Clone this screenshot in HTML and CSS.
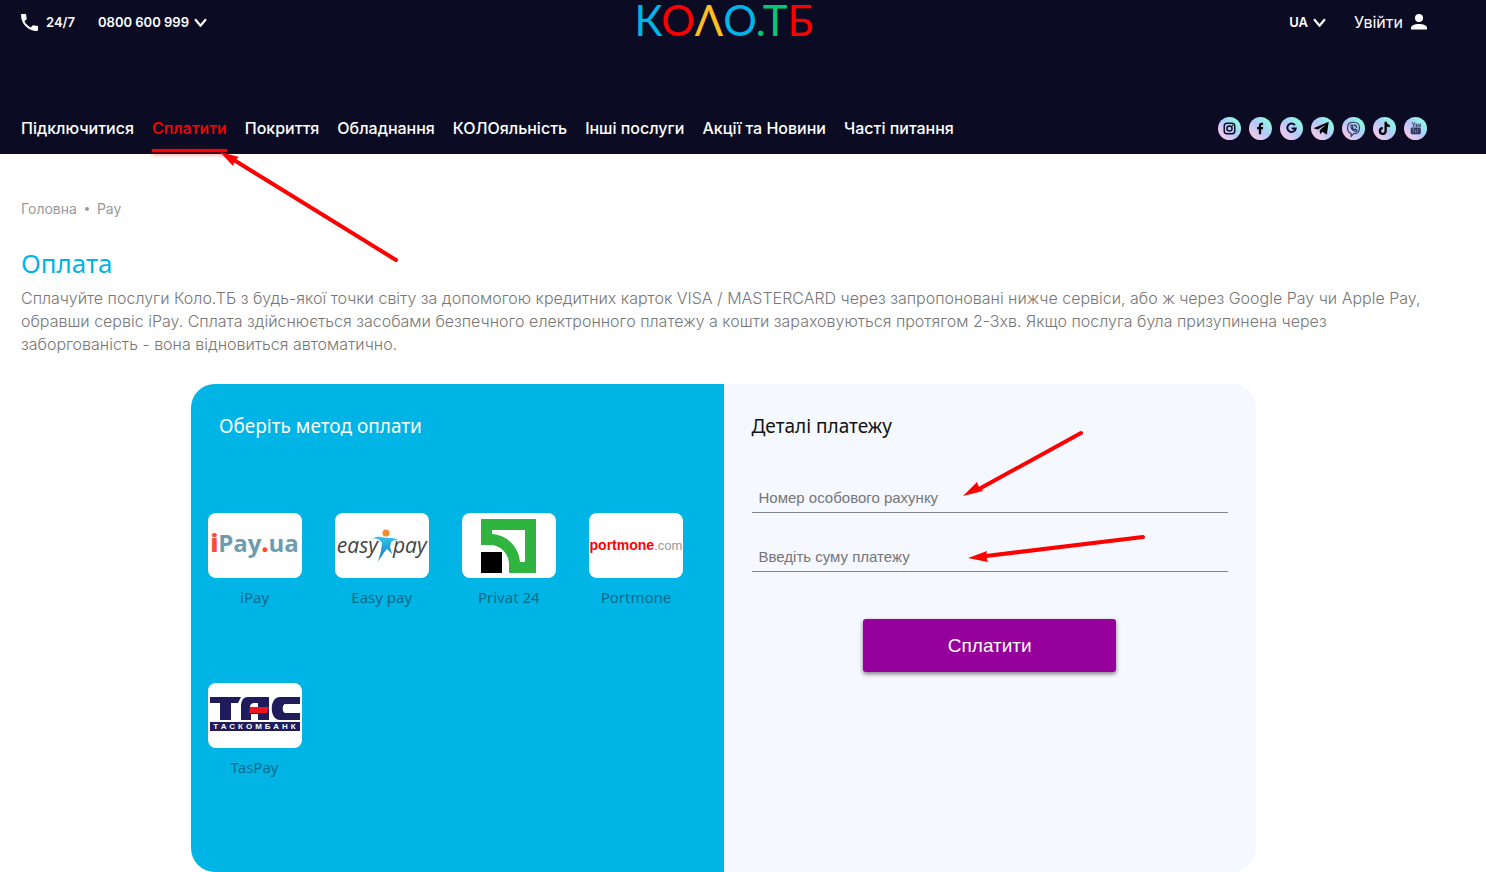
FILE: index.html
```html
<!DOCTYPE html>
<html lang="uk">
<head>
    <meta charset="UTF-8">
    <meta name="viewport" content="width=device-width, initial-scale=1.0">
    <title>Коло.ТБ - Оплата</title>
    <link rel="stylesheet" href="styles.css">
</head>
<body>
    <svg width="0" height="0" class="defs" aria-hidden="true">
        <defs>
            <linearGradient id="bubble" x1="0" y1="1" x2="1" y2="0">
                <stop offset="0.1" stop-color="#ffc8e6"/>
                <stop offset="0.5" stop-color="#b4c8fa"/>
                <stop offset="0.85" stop-color="#8cfae1"/>
            </linearGradient>
            <linearGradient id="man" x1="0" y1="0" x2="0" y2="1">
                <stop offset="0" stop-color="#35c4ec"/>
                <stop offset="1" stop-color="#0e78b4"/>
            </linearGradient>
        </defs>
    </svg>

    <header class="header">
        <div class="top-bar">
            <div class="phones">
                <svg class="icon-phone" viewBox="3 3 18 18" width="17" height="17"><path fill="#fff" d="M6.62 10.79c1.44 2.83 3.76 5.14 6.59 6.59l2.2-2.2c.27-.27.67-.36 1.02-.24 1.12.37 2.33.57 3.57.57.55 0 1 .45 1 1V20c0 .55-.45 1-1 1-9.39 0-17-7.61-17-17 0-.55.45-1 1-1h3.5c.55 0 1 .45 1 1 0 1.25.2 2.45.57 3.57.11.35.03.74-.25 1.02l-2.2 2.2z"/></svg>
                <span class="all-day">24/7</span>
                <button type="button" class="drop phone-number">0800 600 999
                    <svg viewBox="0 0 12 8" width="13" height="9"><path d="M1 1l5 6 5-6" fill="none" stroke="#fff" stroke-width="2"/></svg>
                </button>
            </div>
            <a href="#" class="logo" aria-label="КОЛО.ТБ"><span class="c-blue">К</span><span class="c-red">О</span><span class="c-yellow">Λ</span><span class="c-blue">О</span><span class="c-green">.Т</span><span class="c-red">Б</span></a>
            <div class="account">
                <button type="button" class="drop">UA
                    <svg viewBox="0 0 12 8" width="13" height="9"><path d="M1 1l5 6 5-6" fill="none" stroke="#fff" stroke-width="2"/></svg>
                </button>
                <a href="#" class="login">Увійти
                    <svg viewBox="0 0 16 16" width="16" height="16"><circle cx="8" cy="4" r="4" fill="#fff"/><path d="M0 15.500v-1.500c0-2.600 4-4 8-4s8 1.400 8 4v1.500z" fill="#fff"/></svg>
                </a>
            </div>
        </div>
        <div class="menu-bar">
            <nav class="menu">
                <a href="#">Підключитися</a>
                <a href="#" class="active">Сплатити
                    <svg class="arrow arrow-menu" viewBox="0 0 180 112" width="180" height="112"><path d="M176 108L14 8" stroke="#f00" stroke-width="4" stroke-linecap="round"/><path d="M0 0l19 5-4 3-2 6z" fill="#f00"/></svg>
                </a>
                <a href="#">Покриття</a>
                <a href="#">Обладнання</a>
                <a href="#">КОЛОяльність</a>
                <a href="#">Інші послуги</a>
                <a href="#">Акції та Новини</a>
                <a href="#">Часті питання</a>
            </nav>
            <div class="socials">
                <a href="#" aria-label="Instagram"><svg viewBox="0 0 24 24"><circle cx="12" cy="12" r="12" fill="url(#bubble)"/><rect x="6.500" y="6.500" width="11" height="11" rx="3" fill="none" stroke="#0b0c24" stroke-width="1.500"/><circle cx="12" cy="12" r="2.700" fill="none" stroke="#0b0c24" stroke-width="1.500"/><circle cx="15.200" cy="8.800" r=".8" fill="#0b0c24"/></svg></a>
                <a href="#" aria-label="Facebook"><svg viewBox="0 0 24 24"><circle cx="12" cy="12" r="12" fill="url(#bubble)"/><path fill="#000" d="M10.300 18v-5.300H8.500v-2.300h1.800V8.800C10.300 7 11.400 6 13 6h1.700v2.200h-1.100c-.7 0-.9.300-.9.900v1.300h2l-.3 2.300h-1.700V18z"/></svg></a>
                <a href="#" aria-label="Google"><svg viewBox="0 0 24 24"><circle cx="12" cy="12" r="12" fill="url(#bubble)"/><path d="M15.600 8.600A4.400 4.400 0 1 0 16.400 12H12.200" fill="none" stroke="#0b0c24" stroke-width="2"/></svg></a>
                <a href="#" aria-label="Telegram"><svg viewBox="0 0 24 24"><circle cx="12" cy="12" r="12" fill="url(#bubble)"/><path fill="#000" d="M2.500 11.800L18.500 5l-2 13.500-4.500-3-2.500 2.600-.5-4.400 6.500-5.700-8.500 5z"/></svg></a>
                <a href="#" aria-label="Viber"><svg viewBox="0 0 24 24"><circle cx="12" cy="12" r="12" fill="url(#bubble)"/><path d="M12 5.500c4.500 0 6.200 1.500 6.200 6s-1.700 6-6.200 6l-2.500 2.600v-3c-2.700-.7-3.700-2.400-3.700-5.600 0-4.500 1.700-6 6.200-6z" fill="none" stroke="#30375e" stroke-width="1.200"/><path d="M9.200 8.500c-.3 3.600 2.500 6.800 6 6.500l.5-1.500-1.900-1-1 .8c-1-.4-1.600-1.200-1.900-2.200l.7-.9-1-1.900zM12.300 8.200c2 .1 3 1.300 3 3.200" fill="none" stroke="#30375e" stroke-width="1.200"/></svg></a>
                <a href="#" aria-label="TikTok"><svg viewBox="0 0 24 24"><circle cx="12" cy="12" r="12" fill="url(#bubble)"/><path d="M13.200 5v9.700a3 3 0 1 1-3-3M13.200 5.500c.3 2.500 1.800 3.800 4.300 4" fill="none" stroke="#000" stroke-width="2.400"/></svg></a>
                <a href="#" aria-label="YouTube"><svg viewBox="0 0 24 24"><circle cx="12" cy="12" r="12" fill="url(#bubble)"/><path d="M8.500 5.500l1.500 3 1.500-3M10 8.500v2M12.500 7.500v2.500h1.200v-2.500zM15.500 7v3h1.500v-3" fill="none" stroke="#30375e"/><rect x="7" y="11" width="10.500" height="7" rx="1.500" fill="#30375e"/><path d="M8.500 12.500h2.500M9.700 12.500v4M12 13.500v3M14 12.500v4" stroke="#8c9cc8" stroke-width=".7"/></svg></a>
            </div>
        </div>
    </header>

    <main class="content">
        <div class="breadcrumbs"><a href="#">Головна</a><i></i><span>Pay</span></div>
        <h1>Оплата</h1>
        <p class="intro">Сплачуйте послуги Коло.ТБ з будь-якої точки світу за допомогою кредитних карток VISA / MASTERCARD через запропоновані нижче сервіси, або ж через Google Pay чи Apple Pay, обравши сервіс iPay. Сплата здійснюється засобами безпечного електронного платежу а кошти зараховуються протягом 2-3хв. Якщо послуга була призупинена через заборгованість - вона відновиться автоматично.</p>

        <div class="payment">
            <section class="methods">
                <h2>Оберіть метод оплати</h2>
                <div class="method-list">
                    <a href="#" class="method">
                        <span class="tile ipay"><b>i</b>Pay<b>.</b>ua</span>
                        <span>iPay</span>
                    </a>
                    <a href="#" class="method">
                        <span class="tile easypay">
                            <span>easy</span>
                            <svg viewBox="0 0 27 33" width="27" height="33"><circle cx="14" cy="4" r="3.500" fill="#f08a2c"/><path fill="url(#man)" d="M0 10c4-3 8-2.500 12-1.500 5 .8 10-.5 15 3-3-.6-5-.6-7.500 1l-1.500 5 2 7.500-5-5-3 3.500-6 9 3-10.500 1-8.500C7 9.800 4 9 0 10z"/></svg>
                            <span>pay</span>
                        </span>
                        <span>Easy pay</span>
                    </a>
                    <a href="#" class="method">
                        <span class="tile">
                            <svg viewBox="0 0 55 54" width="55" height="54"><path fill="#2fb440" d="M0 0h55v54H28v-9C28 34 19 26 9 26H0z"/><path fill="#fff" d="M11 11h33v32h-5C38 28 26 16 11 15z"/><path d="M0 33h21v21H0z"/></svg>
                        </span>
                        <span>Privat 24</span>
                    </a>
                    <a href="#" class="method">
                        <span class="tile portmone"><b>portmone</b>.com</span>
                        <span>Portmone</span>
                    </a>
                    <a href="#" class="method">
                        <span class="tile tas">
                            <svg viewBox="0 0 90 23" width="90" height="23"><path fill="#201c5c" d="M0 0h31l-3 6h-7v17H10V6H0zM38 0h21v23H48v-6h-7v6H31V10C31 4 33 0 38 0zM70 0h20v7H75c-3 0-3 9 0 9h15v7H70c-11 0-11-23 0-23z"/><path fill="#f0141e" d="M40 10h19l-2 6H39z"/><path fill="#fff" d="M40 10c0-3 2-4 4-4h4v4z"/></svg>
                            <span>ТАСКОМБАНК</span>
                        </span>
                        <span>TasPay</span>
                    </a>
                </div>
            </section>

            <form class="details">
                <h2>Деталі платежу</h2>
                <div class="field">
                    <input type="text" placeholder="Номер особового рахунку" aria-label="Номер особового рахунку">
                    <svg class="arrow arrow-account" viewBox="0 0 122 68" width="122" height="68"><path d="M118 3L16 59" stroke="#f00" stroke-width="4" stroke-linecap="round"/><path d="M0 66l14-14 2 5 4 4z" fill="#f00"/></svg>
                </div>
                <div class="field">
                    <input type="text" placeholder="Введіть суму платежу" aria-label="Введіть суму платежу">
                    <svg class="arrow arrow-sum" viewBox="0 0 180 32" width="180" height="32"><path d="M175 4L18 23" stroke="#f00" stroke-width="4" stroke-linecap="round"/><path d="M0 25l19-7-1 5 2 6z" fill="#f00"/></svg>
                </div>
                <button type="submit">Сплатити</button>
            </form>
        </div>
    </main>
</body>
</html>
```
FILE: styles.css
```css
body {
    margin: 0;
    font-family: Inter, "Noto Sans", sans-serif;
    background: #fff;
}
a {
    color: inherit;
    text-decoration: none;
}
.defs {
    position: absolute;
}
.header {
    background: #0b0c24;
    color: #fff;
    padding: 0 59px 0 21px;
}
.top-bar {
    display: grid;
    grid-template-columns: 1fr auto 1fr;
    height: 102px;
    align-items: start;
}
.phones, .account {
    display: flex;
    align-items: center;
    height: 44px;
    font-size: 13px;
    font-weight: 600;
}
.all-day {
    margin: 0 23px 0 8px;
}
.drop {
    display: flex;
    align-items: center;
    gap: 5px;
    padding: 0;
    border: 0;
    background: none;
    color: #fff;
    font: inherit;
    cursor: pointer;
}
.logo {
    font-family: Lato, "Open Sans", sans-serif;
    font-size: 42px;
    line-height: 40px;
}
.c-blue { color: #00b4e6; }
.c-red { color: #f00; }
.c-yellow { color: #ffbe1e; }
.c-green { color: #00c878; }
.account {
    justify-content: flex-end;
    gap: 28px;
}
.login {
    display: flex;
    align-items: center;
    gap: 8px;
    font-size: 16px;
    font-weight: 400;
}
.menu-bar {
    display: flex;
    justify-content: space-between;
    height: 52px;
}
.menu {
    display: flex;
    gap: 18px;
    font-size: 16px;
    font-weight: 500;
    line-height: 52px;
    white-space: nowrap;
}
.menu .active {
    position: relative;
    color: #f00;
}
.menu .active::after {
    content: "";
    position: absolute;
    left: 0;
    right: 0;
    bottom: 2px;
    height: 3px;
    background: #f00;
    box-shadow: 0 2px 4px rgba(255, 0, 0, 0.6);
}
.arrow {
    position: absolute;
    pointer-events: none;
    fill: none;
}
.arrow-menu {
    left: 68px;
    top: 50px;
}
.socials {
    display: flex;
    align-items: center;
    gap: 8px;
}
.socials svg {
    display: block;
    width: 23px;
    height: 23px;
}
.content {
    padding: 45px 60px 0 21px;
}
.breadcrumbs {
    display: flex;
    align-items: center;
    font-size: 14px;
    line-height: 20px;
    color: #999;
}
.breadcrumbs i {
    width: 4px;
    height: 4px;
    margin: 0 8px;
    border-radius: 50%;
    background: #999;
}
h1 {
    margin: 24px 0 4px;
    font-family: "Noto Sans", sans-serif;
    font-size: 26px;
    font-weight: 400;
    line-height: 40px;
    color: #00b4e6;
}
.intro {
    margin: 0 0 28px;
    font-size: 16px;
    font-weight: 300;
    line-height: 23px;
    color: #777;
}
.payment {
    display: grid;
    grid-template-columns: 1fr 1fr;
    max-width: 1065px;
    min-height: 488px;
    margin: 0 auto;
    border-radius: 24px;
    background: #f5f8ff;
}
.payment h2 {
    margin: 0;
    font-family: "Noto Sans", sans-serif;
    font-size: 19px;
    font-weight: 400;
    line-height: 28px;
}
.methods {
    padding: 28px 24px 0 0;
    border-radius: 24px 0 0 24px;
    background: #00b4e6;
}
.methods h2 {
    padding-left: 28px;
    color: #fff;
}
.method-list {
    display: grid;
    grid-template-columns: repeat(4, 1fr);
    row-gap: 74px;
    margin-top: 73px;
}
.method {
    display: flex;
    flex-direction: column;
    align-items: center;
    gap: 8px;
    font-family: "Noto Sans", sans-serif;
    font-size: 15px;
    line-height: 23px;
    color: #086c8c;
}
.tile {
    display: flex;
    align-items: center;
    justify-content: center;
    box-sizing: border-box;
    width: 94px;
    height: 65px;
    border-radius: 8px;
    background: #fff;
}
.ipay {
    padding-bottom: 6px;
    font-family: "Open Sans", sans-serif;
    font-size: 24px;
    font-weight: 700;
    color: #6e9caf;
}
.ipay b {
    color: #ff4b32;
}
.easypay {
    font-family: "Open Sans", sans-serif;
    font-size: 21px;
    font-style: italic;
    color: #444;
}
.easypay svg {
    flex-shrink: 0;
    margin: 0 -6px;
}
.portmone {
    font-family: "Liberation Sans", sans-serif;
    font-size: 13px;
    color: #999;
}
.portmone b {
    font-size: 14px;
    color: #f00;
}
.tas {
    flex-direction: column;
    gap: 2px;
    padding-bottom: 4px;
}
.tas span {
    box-sizing: border-box;
    width: 90px;
    padding-left: 3px;
    background: #201c5c;
    color: #fff;
    font-family: "Liberation Sans", sans-serif;
    font-size: 8px;
    font-weight: 700;
    letter-spacing: 3px;
    line-height: 9px;
    text-align: center;
}
.details {
    padding: 28px;
}
.details h2 {
    margin-bottom: 44px;
    color: #111;
}
.field {
    position: relative;
    margin-bottom: 30px;
}
.field input {
    box-sizing: border-box;
    width: 100%;
    height: 29px;
    padding: 0 7px 2px;
    border: 0;
    border-bottom: 1px solid #85878c;
    background: none;
    font-family: "Liberation Sans", sans-serif;
    font-size: 15px;
}
.field input::placeholder {
    color: #757575;
}
.arrow-account {
    left: 211px;
    top: -54px;
}
.arrow-sum {
    left: 216px;
    top: -10px;
}
.details button {
    display: block;
    width: 253px;
    height: 53px;
    margin: 47px auto 0;
    border: 0;
    border-radius: 3px;
    background: #96009b;
    box-shadow: 0 2px 4px rgba(0, 0, 0, 0.5);
    color: #fff;
    font-family: "Liberation Sans", sans-serif;
    font-size: 19px;
    cursor: pointer;
}
```
